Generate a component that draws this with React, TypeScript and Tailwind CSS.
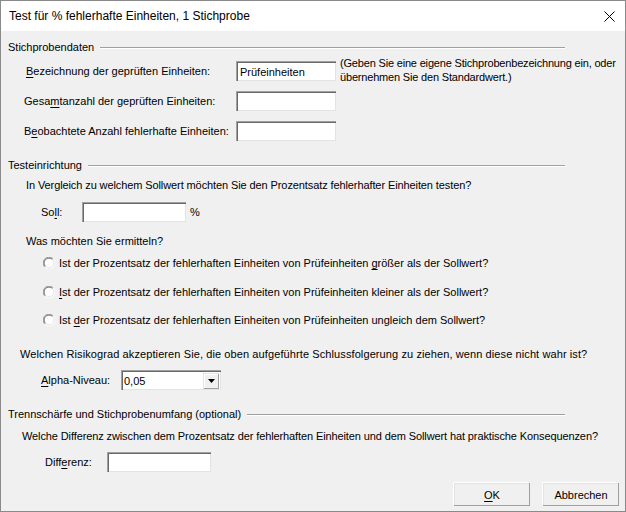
import React from 'react';

const TextBox = ({ value, className = '' }: { value?: string; className?: string }) => (
  <div
    className={`h-[20px] bg-white border-t border-l border-[#a0a0a0] border-r-white border-b-white shadow-[inset_1px_1px_0_#696969,inset_-1px_-1px_0_#e3e3e3] flex items-center pl-[3px] ${className}`}
  >
    {value}
  </div>
);

const Header = ({ title }: { title: string }) => (
  <div className="h-[14px] flex items-center pl-[7px]">
    <span className="whitespace-nowrap">{title}</span>
    <div className="flex-1 ml-[6px] mr-[60px] h-[2px] border-t border-[#a0a0a0] border-b border-b-white mt-[1px]" />
  </div>
);

const Radio = () => (
  <svg width="12" height="12" viewBox="0 0 12 12" className="shrink-0">
    <circle cx="6" cy="6" r="5.5" fill="#fff" />
    <path d="M1.8 10.2 A5.5 5.5 0 0 1 10.2 1.8" fill="none" stroke="#a0a0a0" strokeWidth="1" />
    <path d="M10.2 1.8 A5.5 5.5 0 0 1 1.8 10.2" fill="none" stroke="#ffffff" strokeWidth="1" />
    <path d="M2.5 9.5 A4.5 4.5 0 0 1 9.5 2.5" fill="none" stroke="#696969" strokeWidth="1" />
    <path d="M9.5 2.5 A4.5 4.5 0 0 1 2.5 9.5" fill="none" stroke="#e3e3e3" strokeWidth="1" />
  </svg>
);

const RadioRow = ({ children, mt }: { children: React.ReactNode; mt: string }) => (
  <div className={`h-[14px] flex items-center pl-[42px] ${mt}`}>
    <Radio />
    <span className="ml-[4px] whitespace-nowrap">{children}</span>
  </div>
);

const Button = ({ children }: { children: React.ReactNode }) => (
  <button className="w-[77px] h-[24px] bg-[#f0f0f0] border-t border-l border-white border-r-[#404040] border-b-[#404040] shadow-[inset_-1px_-1px_0_#a0a0a0,inset_1px_1px_0_#e3e3e3] flex items-center justify-center text-black">
    {children}
  </button>
);

const U = ({ children }: { children: React.ReactNode }) => <span className="underline underline-offset-2">{children}</span>;

export default function App() {
  return (
    <div className="w-[626px] h-[512px] flex flex-col border border-[#8a8a8a] bg-[#f0f0f0] text-black text-[11px] leading-[14px] font-['Liberation_Sans',Arial,sans-serif] overflow-hidden">
      <div className="h-[30px] shrink-0 bg-white flex items-center justify-between pl-[8px] pr-[10px]">
        <span className="text-[12px]">Test für % fehlerhafte Einheiten, 1 Stichprobe</span>
        <svg width="11" height="11" viewBox="0 0 11 11">
          <path d="M0.5 0.5 L10.5 10.5 M10.5 0.5 L0.5 10.5" stroke="#000" strokeWidth="1" />
        </svg>
      </div>

      <div className="flex-1 flex flex-col">
        <div className="mt-[9px]">
          <Header title="Stichprobendaten" />
        </div>

        <div className="mt-[7px] h-[20px] flex items-start pl-[25px]">
          <span className="w-[210px] h-[20px] flex items-center">
            <U>B</U>ezeichnung der geprüften Einheiten:
          </span>
          <TextBox value="Prüfeinheiten" className="w-[100px]" />
          <div className="ml-[4px] -mt-[5px] leading-[14px] whitespace-nowrap tracking-[-0.18px]">
            (Geben Sie eine eigene Stichprobenbezeichnung ein, oder
            <br />
            übernehmen Sie den Standardwert.)
          </div>
        </div>

        <div className="mt-[10px] h-[20px] flex items-center pl-[23px]">
          <span className="w-[212px]">
            Gesa<U>m</U>tanzahl der geprüften Einheiten:
          </span>
          <TextBox className="w-[100px]" />
        </div>

        <div className="mt-[10px] h-[20px] flex items-center pl-[23px]">
          <span className="w-[212px]">
            B<U>e</U>obachtete Anzahl fehlerhafte Einheiten:
          </span>
          <TextBox className="w-[100px]" />
        </div>

        <div className="mt-[17px]">
          <Header title="Testeinrichtung" />
        </div>

        <div className="mt-[6px] h-[14px] pl-[25px] whitespace-nowrap tracking-[-0.1px]">
          In Vergleich zu welchem Sollwert möchten Sie den Prozentsatz fehlerhafter Einheiten testen?
        </div>

        <div className="mt-[10px] h-[20px] flex items-center pl-[40px]">
          <span className="w-[41px]">
            So<U>l</U>l:
          </span>
          <TextBox className="w-[104px]" />
          <span className="ml-[4px]">%</span>
        </div>

        <div className="mt-[12px] h-[14px] pl-[25px]">Was möchten Sie ermitteln?</div>

        <RadioRow mt="mt-[8px]">
          Ist der Prozentsatz der fehlerhaften Einheiten von Prüfeinheiten <U>g</U>rößer als der Sollwert?
        </RadioRow>
        <RadioRow mt="mt-[15px]">
          <U>I</U>st der Prozentsatz der fehlerhaften Einheiten von Prüfeinheiten kleiner als der Sollwert?
        </RadioRow>
        <RadioRow mt="mt-[14px]">
          Ist <U>d</U>er Prozentsatz der fehlerhaften Einheiten von Prüfeinheiten ungleich dem Sollwert?
        </RadioRow>

        <div className="mt-[20px] h-[14px] pl-[19px] whitespace-nowrap tracking-[0.1px]">
          Welchen Risikograd akzeptieren Sie, die oben aufgeführte Schlussfolgerung zu ziehen, wenn diese nicht wahr ist?
        </div>

        <div className="mt-[9px] h-[20px] flex items-center pl-[40px]">
          <span className="w-[80px]">
            <U>A</U>lpha-Niveau:
          </span>
          <div className="w-[100px] h-[20px] bg-white border-t border-l border-[#a0a0a0] border-r-white border-b-white shadow-[inset_1px_1px_0_#696969,inset_-1px_-1px_0_#e3e3e3] flex items-center justify-between pl-[2px] pr-[2px]">
            <span>0,05</span>
            <div className="w-[16px] h-[16px] bg-[#f0f0f0] border-t border-l border-[#e3e3e3] border-r-[#404040] border-b-[#404040] shadow-[inset_-1px_-1px_0_#a0a0a0,inset_1px_1px_0_#fff] flex items-center justify-center">
              <svg width="7" height="4" viewBox="0 0 7 4">
                <path d="M0 0 H7 L3.5 4 Z" fill="#000" />
              </svg>
            </div>
          </div>
        </div>

        <div className="mt-[17px]">
          <Header title="Trennschärfe und Stichprobenumfang (optional)" />
        </div>

        <div className="mt-[8px] h-[14px] pl-[21px] whitespace-nowrap tracking-[-0.11px]">
          Welche Differenz zwischen dem Prozentsatz der fehlerhaften Einheiten und dem Sollwert hat praktische Konsequenzen?
        </div>

        <div className="mt-[9px] h-[20px] flex items-center pl-[44px]">
          <span className="w-[62px]">
            Diff<U>e</U>renz:
          </span>
          <TextBox className="w-[104px]" />
        </div>

        <div className="mt-[10px] flex justify-end gap-[12px] pr-[6px]">
          <Button>
            <U>O</U>K
          </Button>
          <Button>Abbrechen</Button>
        </div>
      </div>
    </div>
  );
}
